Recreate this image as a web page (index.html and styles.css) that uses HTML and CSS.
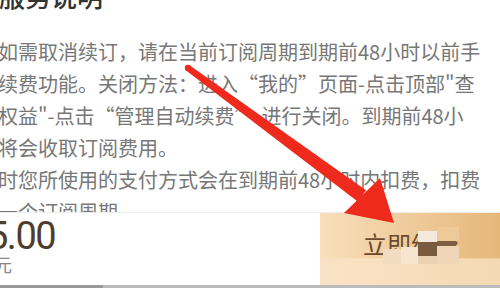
FILE: index.html
```html
<!DOCTYPE html>
<html lang="zh-CN">
<head>
    <meta charset="UTF-8">
    <meta name="viewport" content="width=device-width, initial-scale=1.0">
    <title>服务说明</title>
    <link rel="stylesheet" href="styles.css">
</head>
<body>
    <div class="scroll">
        <h2 class="title">服务说明</h2>
        <p class="desc">
            如需取消续订，请在当前订阅周期到期前48小时以前手<br>
            续费功能。关闭方法：进入“我的”页面-点击顶部"查<br>
            权益"-点击“管理自动续费”-进行关闭。到期前48小<br>
            将会收取订阅费用。<br>
            时您所使用的支付方式会在到期前48小时内扣费，扣费<br>
            一个订阅周期
        </p>
    </div>

    <div class="bar">
        <div class="price-box">
            <div class="price">5.00</div>
            <div class="unit">元</div>
        </div>
        <div class="buy-btn">
            <span class="buy-text">立即续费</span>
            <div class="mosaic">
                <i class="m0"></i><i class="m1"></i><i class="m2"></i><i class="m3"></i>
                <i class="m4"></i><i class="m5"></i><i class="m6"></i><i class="m7"></i>
            </div>
        </div>
    </div>
    <div class="strip"></div>

    <!-- annotation arrow drawn over the screenshot -->
    <svg class="arrow" width="500" height="288" viewBox="0 0 500 288">
        <polygon points="189.6,65.2 186.4,70.8 358,201.8 366,190.2" fill="#ee2a1c"/>
        <circle cx="188" cy="68" r="3.2" fill="#ee2a1c"/>
        <polygon points="380,178 344,213 394,223" fill="#ee2a1c"/>
    </svg>
</body>
</html>
```

FILE: styles.css
```css
body {
    margin: 0;
    width: 500px;
    height: 288px;
    overflow: hidden;
    position: relative;
    display: flex;
    flex-direction: column;
    background-color: #fff;
    font-family: "Noto Sans CJK SC", "Noto Sans", sans-serif;
}
.scroll {
    flex: 1;
    overflow: hidden;
}
.title {
    margin: -18px 0 26px -1px;
    font-size: 26px;
    line-height: 28px;
    font-weight: 500;
    color: #333;
}
.desc {
    margin: 0 0 0 -2px;
    font-size: 20px;
    line-height: 32px;
    color: #777;
    white-space: nowrap;
}
.bar {
    height: 72px;
    border-top: 1px solid #eee;
    display: flex;
    flex-shrink: 0;
}
.price-box {
    flex: 1;
    padding-top: 4px;
}
.price {
    margin-left: -13px;
    font-family: Roboto, "Noto Sans", sans-serif;
    font-size: 38px;
    line-height: 38px;
    letter-spacing: -1.5px;
    color: #4e3c2e;
}
.unit {
    margin-left: -6px;
    font-size: 18px;
    line-height: 18px;
    color: #888;
}
.buy-btn {
    width: 180px;
    position: relative;
    display: flex;
    align-items: center;
    justify-content: center;
    padding-bottom: 10px;
    box-sizing: border-box;
    background:
        linear-gradient(to bottom, rgba(250, 228, 200, 0) 62%, rgba(250, 228, 200, 0.75) 64%),
        linear-gradient(to right, #f9dfbc, #e5b779);
}
.buy-text {
    margin-left: 2px;
    font-size: 24px;
    line-height: 24px;
    color: #6b4a2c;
}
.mosaic i {
    position: absolute;
    display: block;
}
.m0 { left: 117px; top: 14px; width: 22px; height: 14px; background: #edca98; }
.m1 { left: 63px; top: 36px; width: 18px; height: 15px; background: #f2dcc1; }
.m2 { left: 81px; top: 34px; width: 17px; height: 17px; background: #f7e5d0; }
.m3 { left: 98px; top: 18px; width: 19px; height: 11px; background: #f5e8dc; }
.m4 { left: 98px; top: 29px; width: 19px; height: 14px; background: #7b5b3d; }
.m5 { left: 98px; top: 43px; width: 19px; height: 8px; background: #ecd2b2; }
.m6 { left: 117px; top: 28px; width: 19px; height: 5px; background: #806040; }
.m7 { left: 117px; top: 33px; width: 22px; height: 18px; background: #efd6b8; }
.strip {
    height: 3px;
    flex-shrink: 0;
    background: linear-gradient(to right, #999 0, #999 103px, #bbb 103px);
}
.arrow {
    position: absolute;
    left: 0;
    top: 0;
    pointer-events: none;
}
```
